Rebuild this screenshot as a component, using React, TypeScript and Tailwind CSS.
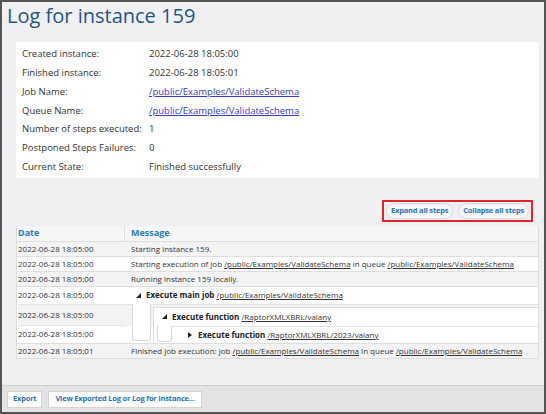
import type { ReactNode } from 'react';

const info: { label: string; value: string; link?: boolean }[] = [
  { label: 'Created instance:', value: '2022-06-28 18:05:00' },
  { label: 'Finished instance:', value: '2022-06-28 18:05:01' },
  { label: 'Job Name:', value: '/public/Examples/ValidateSchema', link: true },
  { label: 'Queue Name:', value: '/public/Examples/ValidateSchema', link: true },
  { label: 'Number of steps executed:', value: '1' },
  { label: 'Postponed Steps Failures:', value: '0' },
  { label: 'Current State:', value: 'Finished successfully' },
];

function Path({ children }: { children: ReactNode }) {
  return <span className="underline text-[#333]">{children}</span>;
}

function Open() {
  return (
    <svg width="5" height="5" viewBox="0 0 5 5" className="shrink-0">
      <polygon points="5,0 5,5 0,5" fill="#222" />
    </svg>
  );
}

function Closed() {
  return (
    <svg width="4" height="6" viewBox="0 0 4 6" className="shrink-0">
      <polygon points="0,0 4,3 0,6" fill="#222" />
    </svg>
  );
}

function Row({ date, gray, children }: { date: string; gray?: boolean; children: ReactNode }) {
  return (
    <div className={`flex h-[15px] items-center border-t border-[#dedede] ${gray ? 'bg-[#f3f3f3]' : 'bg-white'}`}>
      <div className="w-[108px] shrink-0 pl-[1px]">{date}</div>
      <div className="pl-[6px] whitespace-nowrap">{children}</div>
    </div>
  );
}

export default function App() {
  return (
    <div className="w-[546px] h-[414px] border-2 border-[#555] bg-[#f0f0f2] flex flex-col font-['Open_Sans',sans-serif] text-[#333] overflow-hidden">
      <h1 className="text-[20px] leading-[26px] text-[#1f5489] pl-[5px] pt-[1px]">Log for instance 159</h1>

      <div className="ml-[14px] mr-[5px] mt-[13px] bg-white pl-[6px] pt-[3px] pb-[1px] text-[9.5px]">
        {info.map((r) => (
          <div key={r.label} className="flex h-[18.8px] items-center">
            <div className="w-[127px] shrink-0">{r.label}</div>
            <div className={r.link ? 'underline text-[#3b3bc8]' : ''}>{r.value}</div>
          </div>
        ))}
      </div>

      <div className="flex justify-end mr-[11px] mt-[22px]">
        <div className="flex gap-[5px] border-2 border-[#e0262a] px-[2px] py-[1px]">
          <button className="h-[16px] px-[4px] rounded-full bg-[#f5f5f5] border border-[#dcdcdc] text-[7.5px] font-bold tracking-[-0.2px] text-[#2d72b8]">
            Expand all steps
          </button>
          <button className="h-[16px] px-[4px] rounded-full bg-[#f5f5f5] border border-[#dcdcdc] text-[7.5px] font-bold tracking-[-0.2px] text-[#2d72b8]">
            Collapse all steps
          </button>
        </div>
      </div>

      <div className="ml-[14px] mr-[5px] mt-[4px] border border-t-0 border-[#dedede] text-[8px] bg-white">
        <div className="flex h-[15px] items-center bg-[#f6f6f6] text-[9px] font-bold text-[#2c7bbf]">
          <div className="w-[108px] shrink-0 pl-[1px] border-r border-[#dedede] h-full flex items-center">Date</div>
          <div className="pl-[6px]">Message</div>
        </div>
        <Row date="2022-06-28 18:05:00" gray>Starting instance 159.</Row>
        <Row date="2022-06-28 18:05:00">
          Starting execution of job <Path>/public/Examples/ValidateSchema</Path> in queue{' '}
          <Path>/public/Examples/ValidateSchema</Path>
        </Row>
        <Row date="2022-06-28 18:05:00" gray>Running instance 159 locally.</Row>

        <div className="flex border-t border-[#dedede]">
          <div className="w-[108px] shrink-0 pl-[1px]">
            <div className="h-[17px] flex items-center bg-white">2022-06-28 18:05:00</div>
            <div className="h-[21px] flex items-center bg-[#f3f3f3] border-t border-[#e4e4e4]">2022-06-28 18:05:00</div>
            <div className="h-[18px] flex items-center bg-white border-t border-[#e4e4e4]">2022-06-28 18:05:00</div>
          </div>
          <div className="flex-1 flex flex-col">
            <div className="h-[17px] flex items-center gap-[5px] pl-[11px] bg-white whitespace-nowrap">
              <Open />
              <span>
                <b className="text-[#222]">Execute main job</b> <Path>/public/Examples/ValidateSchema</Path>
              </span>
            </div>
            <div className="flex h-[39px] bg-[linear-gradient(to_bottom,#f3f3f3_21px,#fff_21px)] border-t border-[#e4e4e4]">
              <div className="ml-[7px] w-[19px] h-[37px] -mt-[1px] bg-white border border-t-0 border-[#d6d6d6] rounded-b-[3px]" />
              <div className="ml-[2px] mt-[2px] flex-1 flex flex-col bg-white border-l border-t border-[#dcdcdc]">
                <div className="h-[18px] flex items-center gap-[5px] pl-[8px] whitespace-nowrap">
                  <Open />
                  <span>
                    <b className="text-[#222]">Execute function</b> <Path>/RaptorXMLXBRL/valany</Path>
                  </span>
                </div>
                <div className="flex h-[17px]">
                  <div className="ml-[3px] w-[15px] h-[16px] border border-t-0 border-[#d6d6d6] rounded-b-[3px]" />
                  <div className="flex items-center gap-[6px] pl-[16px] whitespace-nowrap border-t border-[#e4e4e4] flex-1">
                    <Closed />
                    <span>
                      <b className="text-[#222]">Execute function</b> <Path>/RaptorXMLXBRL/2023/valany</Path>
                    </span>
                  </div>
                </div>
              </div>
            </div>
          </div>
        </div>

        <Row date="2022-06-28 18:05:01" gray>
          Finished job execution: job <Path>/public/Examples/ValidateSchema</Path> in queue{' '}
          <Path>/public/Examples/ValidateSchema</Path>
        </Row>
      </div>

      <div className="mt-auto h-[27px] bg-[#e3e3e5] border-t border-[#cfcfd2] flex items-center gap-[6px] pl-[5px]">
        <button className="h-[17px] px-[5px] bg-white border border-[#d4d4d4] text-[7.5px] font-bold tracking-[-0.2px] text-[#2d72b8]">
          Export
        </button>
        <button className="h-[17px] px-[6px] bg-white border border-[#d4d4d4] text-[7.5px] font-bold tracking-[-0.2px] text-[#2d72b8]">
          View Exported Log or Log for Instance...
        </button>
      </div>
    </div>
  );
}
